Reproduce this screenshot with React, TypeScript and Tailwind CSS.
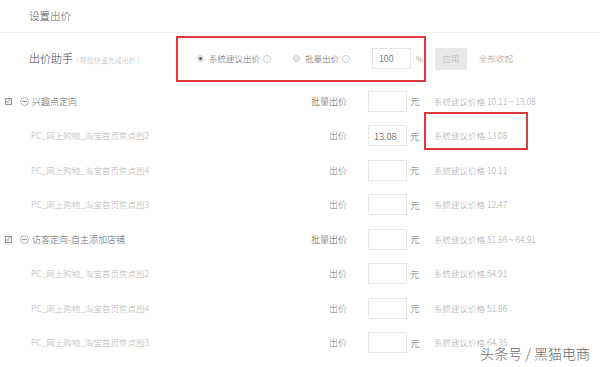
import React from 'react';

const FONT = { fontFamily: '"Noto Sans CJK SC", "Noto Sans", sans-serif' };

type Child = { name: string; price: string; hint: string; boxed?: boolean };
type Group = { name: string; hint: string; items: Child[] };

const GROUPS: Group[] = [
  {
    name: '兴趣点定向',
    hint: '系统建议价格 10.11 ~ 13.08',
    items: [
      { name: 'PC_网上购物_淘宝首页焦点图2', price: '13.08', hint: '系统建议价格 13.08', boxed: true },
      { name: 'PC_网上购物_淘宝首页焦点图4', price: '', hint: '系统建议价格 10.11' },
      { name: 'PC_网上购物_淘宝首页焦点图3', price: '', hint: '系统建议价格 12.47' },
    ],
  },
  {
    name: '访客定向-自主添加店铺',
    hint: '系统建议价格 51.86 ~ 64.91',
    items: [
      { name: 'PC_网上购物_淘宝首页焦点图2', price: '', hint: '系统建议价格 64.91' },
      { name: 'PC_网上购物_淘宝首页焦点图4', price: '', hint: '系统建议价格 51.86' },
      { name: 'PC_网上购物_淘宝首页焦点图3', price: '', hint: '系统建议价格 64.35' },
    ],
  },
];

function Help() {
  return (
    <span className="ml-[3px] inline-flex h-[8px] w-[8px] items-center justify-center rounded-full border border-[#cfcfcf] text-[6px] leading-none text-[#c6c6c6]">
      ?
    </span>
  );
}

function PriceCell({ label, value, hint, boxed, dark }: { label: string; value: string; hint: string; boxed?: boolean; dark?: boolean }) {
  return (
    <div className="flex items-center">
      <div className={`w-[47px] text-right text-[9px] font-light ${dark ? 'text-[#555]' : 'text-[#777]'}`}>{label}</div>
      <div className="ml-[21px] flex h-[21px] w-[39px] items-center border border-[#e6e6e6] bg-white pl-[5px] text-[9.5px] text-[#444]">
        {value}
      </div>
      <div className="ml-[3px] w-[24px] text-[9.5px] text-[#666]">元</div>
      <div className="relative text-[8.5px] font-light text-[#aaa]">
        {hint}
        {boxed && (
          <div className="absolute left-[-10px] top-[-17px] h-[38px] w-[104px] border-2 border-[#e0393b]" />
        )}
      </div>
    </div>
  );
}

export default function App() {
  return (
    <div className="relative h-[367px] w-[600px] overflow-hidden bg-white font-light" style={FONT}>
      {/* header */}
      <div className="flex h-[33px] items-center border-b border-[#efefef] pl-[29px] text-[10.5px] text-[#555]">
        设置出价
      </div>

      {/* bid assistant */}
      <div className="flex h-[51px] items-center">
        <div className="flex w-[176px] items-baseline pl-[29px]">
          <span className="text-[11px] text-[#444]">出价助手</span>
          <span className="ml-[3px] text-[7px] text-[#b0b0b0]">( 帮您快速完成出价 )</span>
        </div>
        <div className="flex h-[46px] w-[250px] items-center border-2 border-[#e0393b] pl-[19px]">
          <span className="flex h-[7px] w-[7px] items-center justify-center rounded-full border border-[#d0d0d0] bg-[#eee]">
            <span className="h-[3px] w-[3px] rounded-full bg-[#555]" />
          </span>
          <span className="ml-[5px] text-[8.5px] text-[#666]">系统建议出价</span>
          <Help />
          <span className="ml-[22px] h-[7px] w-[7px] rounded-full border border-[#d0d0d0] bg-[#e6e6e6]" />
          <span className="ml-[5px] text-[8.5px] text-[#666]">批量出价</span>
          <Help />
          <div className="ml-[22px] flex h-[21px] w-[39px] items-center border border-[#e6e6e6] pl-[6px] text-[9px] text-[#444]">
            100
          </div>
          <span className="ml-[5px] text-[8px] text-[#777]">%</span>
        </div>
        <div className="ml-[9px] flex h-[22px] w-[32px] items-center justify-center rounded-[2px] bg-[#e8e8e8] text-[8.5px] text-[#b8b8b8]">
          应用
        </div>
        <span className="ml-[12px] text-[8.5px] text-[#a0a0a0]">全部收起</span>
      </div>

      {/* groups */}
      <div className="flex flex-col">
        {GROUPS.map((g) => (
          <div key={g.name} className="flex flex-col">
            <div className="flex h-[34.5px] items-center">
              <div className="flex w-[300px] items-center pl-[5px]">
                <span className="flex h-[7px] w-[7px] items-center justify-center border border-[#999] bg-[#f2f2f2] text-[6px] leading-none text-[#333]">
                  ✓
                </span>
                <span className="ml-[8px] flex h-[9px] w-[9px] items-center justify-center rounded-full border border-[#b0b0b0]">
                  <span className="h-px w-[5px] bg-[#999]" />
                </span>
                <span className="ml-[3px] text-[9px] text-[#666]">{g.name}</span>
              </div>
              <PriceCell label="批量出价" value="" hint={g.hint} dark />
            </div>
            {g.items.map((c) => (
              <div key={c.name + c.hint} className="flex h-[34.5px] items-center">
                <div className="w-[300px] pl-[31px] text-[8.5px] text-[#b5b5b5]">{c.name}</div>
                <PriceCell label="出价" value={c.price} hint={c.hint} boxed={c.boxed} />
              </div>
            ))}
          </div>
        ))}
      </div>

      {/* watermark */}
      <div
        className="absolute bottom-[3px] right-[10px] text-[14px] text-[#666]"
        style={{ textShadow: '0 0 2px #fff, 0 0 2px #fff' }}
      >
        头条号 / 黑猫电商
      </div>
    </div>
  );
}
